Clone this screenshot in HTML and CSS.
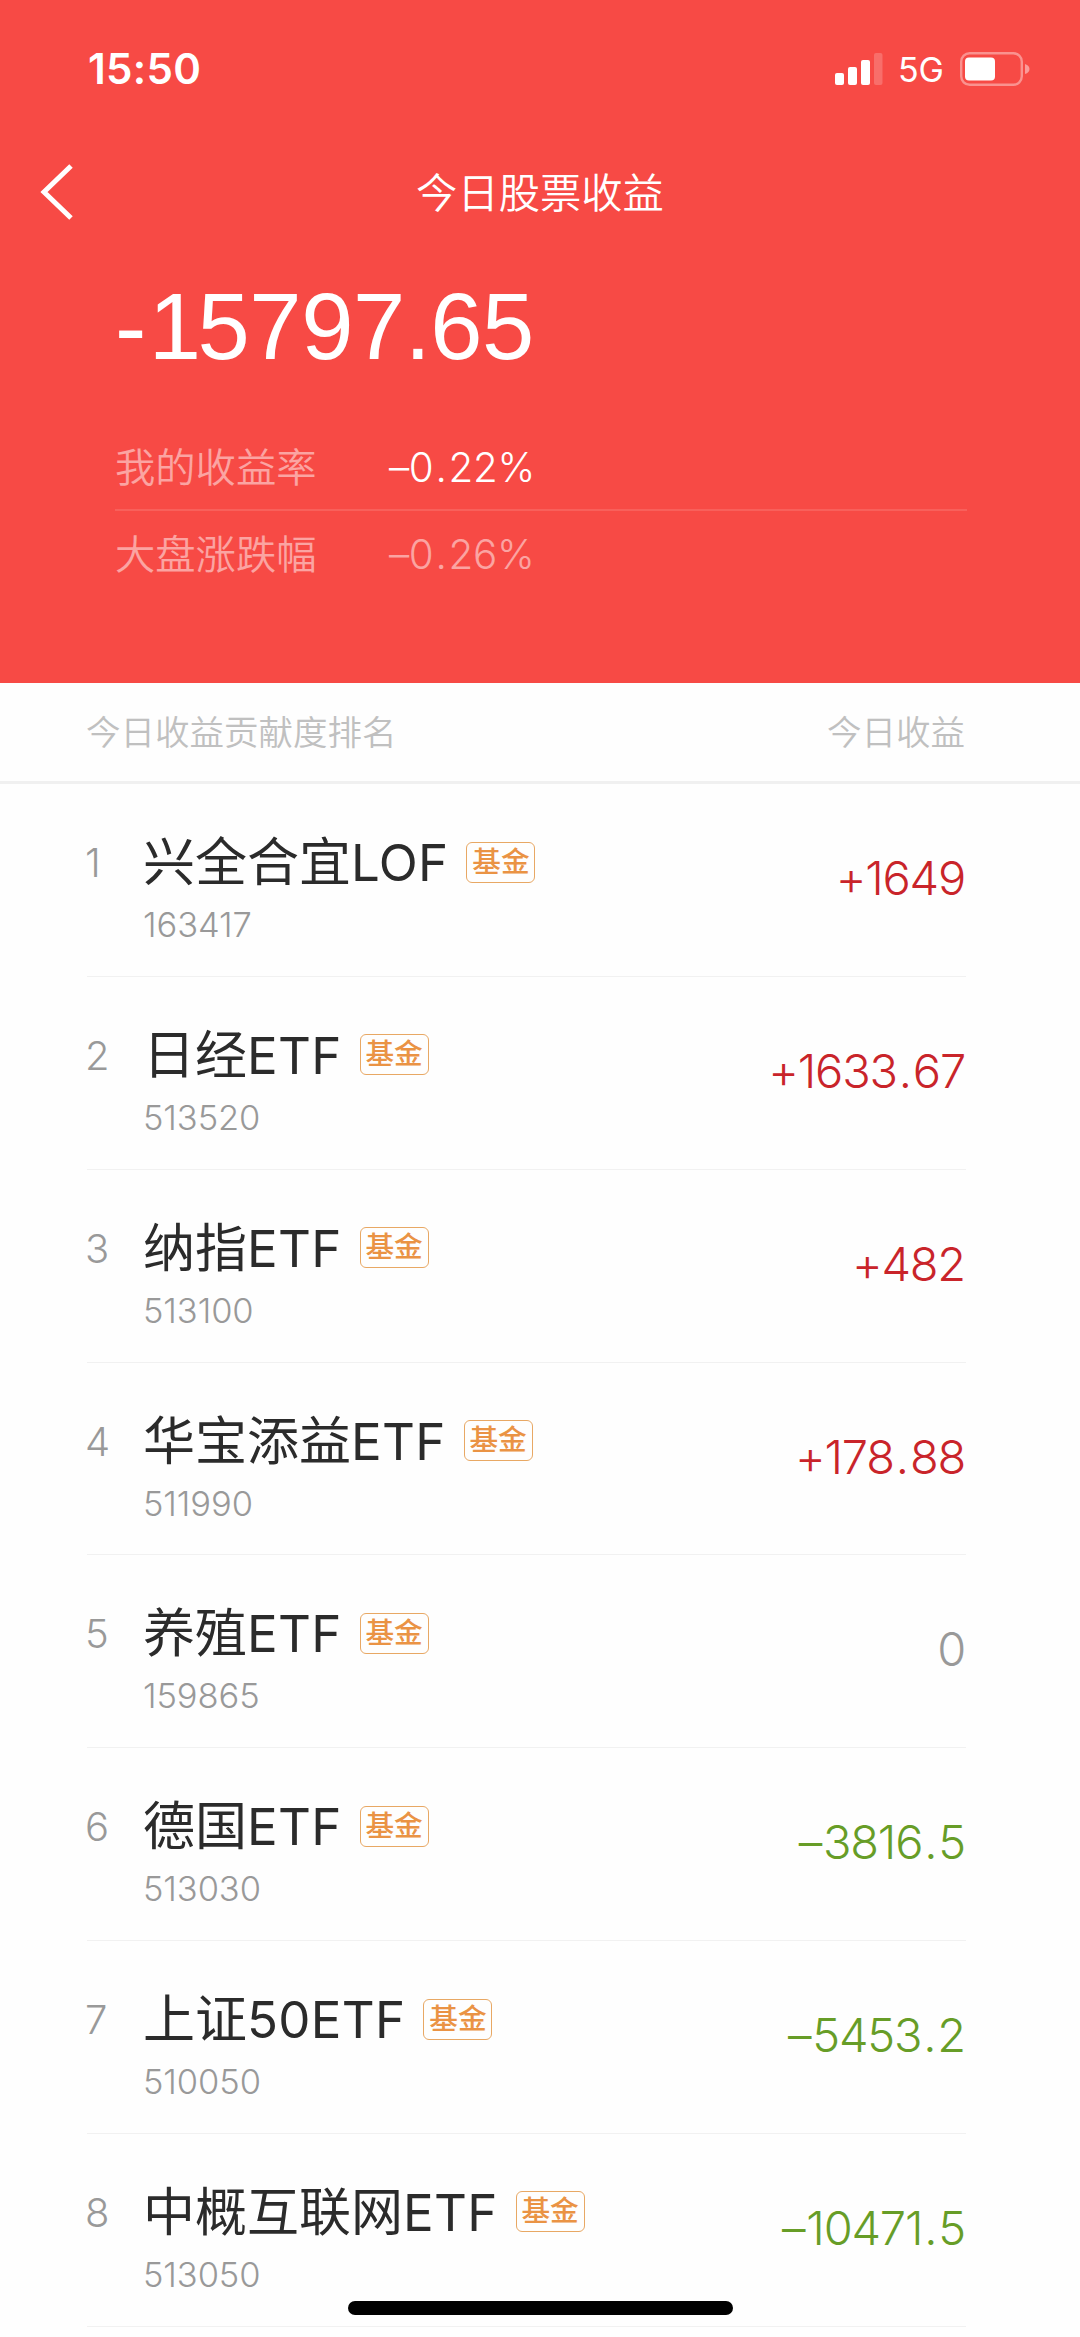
FILE: index.html
```html
<!DOCTYPE html>
<html lang="zh-CN">
<head>
<meta charset="utf-8">
<title>今日股票收益</title>
<link rel="stylesheet" href="styles.css">
</head>
<body>
<header class="hero">
  <div class="status">
    <span class="time">15:50</span>
    <div class="indicators">
      <svg class="signal" width="48" height="32" viewBox="0 0 48 32" fill="#fff"><rect x="0" y="20" width="9" height="12" rx="2"/><rect x="13" y="14" width="9" height="18" rx="2"/><rect x="26" y="7" width="9" height="25" rx="2"/><rect x="39" y="0" width="8.500" height="32" rx="2" opacity=".2"/></svg>
      <span class="network">5G</span>
      <svg class="battery" width="70" height="34" viewBox="0 0 70 34"><rect x="1.200" y="1.200" width="60.600" height="31.600" rx="8.500" fill="none" stroke="#fff" stroke-opacity=".4" stroke-width="2.400"/><rect x="5" y="5.500" width="30" height="23" rx="4" fill="#fff"/><path d="M65 12q4.500 1.500 4.500 5t-4.500 5z" fill="#fff" fill-opacity=".45"/></svg>
    </div>
  </div>
  <nav class="nav">
    <svg class="back" width="36" height="58" viewBox="0 0 36 58" fill="none" stroke="#fff" stroke-width="5"><path d="M33 2L6 28l27 26"/></svg>
    <h1 class="title">今日股票收益</h1>
  </nav>
  <div class="total">-<span class="lead">1</span>5797.65</div>
  <dl class="rates">
    <div class="rate"><dt>我的收益率</dt><dd class="strong">–0<span class="dot">.</span>22%</dd></div>
    <div class="rate"><dt>大盘涨跌幅</dt><dd>–0<span class="dot">.</span>26%</dd></div>
  </dl>
</header>
<div class="columns"><span>今日收益贡献度排名</span><span>今日收益</span></div>
<main class="list">
  <div class="row"><span class="rank">1</span><div class="fund"><div class="name">兴全合宜<span class="latin">LOF</span><span class="tag">基金</span></div><div class="code">163417</div></div><span class="amount up">+1649</span></div>
  <div class="row"><span class="rank">2</span><div class="fund"><div class="name">日经<span class="latin">ETF</span><span class="tag">基金</span></div><div class="code">513520</div></div><span class="amount up">+1633<span class="dot">.</span>67</span></div>
  <div class="row"><span class="rank">3</span><div class="fund"><div class="name">纳指<span class="latin">ETF</span><span class="tag">基金</span></div><div class="code">513100</div></div><span class="amount up">+482</span></div>
  <div class="row"><span class="rank">4</span><div class="fund"><div class="name">华宝添益<span class="latin">ETF</span><span class="tag">基金</span></div><div class="code">511990</div></div><span class="amount up">+178<span class="dot">.</span>88</span></div>
  <div class="row"><span class="rank">5</span><div class="fund"><div class="name">养殖<span class="latin">ETF</span><span class="tag">基金</span></div><div class="code">159865</div></div><span class="amount">0</span></div>
  <div class="row"><span class="rank">6</span><div class="fund"><div class="name">德国<span class="latin">ETF</span><span class="tag">基金</span></div><div class="code">513030</div></div><span class="amount down"><span class="minus">–</span>3816<span class="dot">.</span>5</span></div>
  <div class="row"><span class="rank">7</span><div class="fund"><div class="name">上证<span class="latin">50ETF</span><span class="tag">基金</span></div><div class="code">510050</div></div><span class="amount down"><span class="minus">–</span>5453<span class="dot">.</span>2</span></div>
  <div class="row"><span class="rank">8</span><div class="fund"><div class="name">中概互联网<span class="latin">ETF</span><span class="tag">基金</span></div><div class="code">513050</div></div><span class="amount down"><span class="minus">–</span>10471<span class="dot">.</span>5</span></div>
</main>
<div class="home-bar"></div>
</body>
</html>
```
FILE: styles.css
```css
* { box-sizing: border-box; }
body {
  margin: 0;
  width: 1080px;
  height: 2337px;
  overflow: hidden;
  position: relative;
  background: #fefefe;
  font-family: Inter, "Noto Sans CJK SC", sans-serif;
  font-weight: 300;
}
.hero { height: 683px; background: #f74a45; color: #fff; }
.status { height: 138px; padding: 0 50px 0 88px; display: flex; justify-content: space-between; align-items: center; }
.time { font-size: 42px; font-weight: 600; line-height: 50px; letter-spacing: .3px; }
.indicators { display: flex; align-items: center; }
.network { margin: 2px 16px 0 15px; font-size: 34px; font-weight: 400; line-height: 40px; }
.nav { height: 110px; padding: 0 38px; display: grid; grid-template-columns: 36px 1fr 36px; align-items: center; }
.title { margin: 0; font-size: 41.3px; font-weight: 350; line-height: 60px; text-align: center; }
.total { padding-left: 115px; height: 158px; font: 400 94px/158px "Liberation Sans", sans-serif; letter-spacing: -.5px; }
.lead { margin: 0 -3px 0 3px; }
.rates { margin: 0 113px 0 115px; padding-top: 19px; font-size: 40.3px; font-weight: 350; color: rgba(255, 255, 255, .5); }
.rate { height: 84px; display: flex; align-items: center; }
.rate + .rate { height: 88px; border-top: 2px solid rgba(255, 255, 255, .12); }
.rate dt { width: 274px; padding-bottom: 5px; }
.rate dd { margin: 0; letter-spacing: -.3px; }
.rate .strong { color: #fff; }
.dot { margin: 0 2px; }
.minus { margin-right: 2px; }
.columns { height: 101px; padding: 0 115px 4px 86px; display: flex; justify-content: space-between; align-items: center; border-bottom: 3px solid #f0f0f0; font-size: 34.5px; font-weight: 350; color: #c0c0c0; }
.list { padding: 0 114px 0 87px; }
.row { height: 192.85px; display: grid; grid-template-columns: 57px 1fr auto; border-bottom: 1.500px solid #f1f1f1; color: #999; }
.rank { padding-top: 54px; margin-left: -2px; font-size: 40px; line-height: 50px; }
.fund { padding-top: 46px; }
.name { height: 66px; margin-left: -1px; display: flex; align-items: center; font-size: 52px; font-weight: 400; line-height: 66px; color: #2b2b2b; }
.latin { font-size: 51px; font-weight: 400; letter-spacing: .3px; }
.tag { width: 69px; height: 41px; margin: -2px 0 0 18px; border: 1.500px solid #e8a864; border-radius: 6px; font-size: 28.7px; font-weight: 500; line-height: 37px; text-align: center; color: #ea9344; }
.code { margin: 9px 0 0 -1px; font-size: 34.5px; line-height: 40px; letter-spacing: -.1px; }
.amount { padding: 64px 1px 0 0; font-size: 47px; line-height: 60px; letter-spacing: -1.200px; }
.up { color: #c9242a; }
.down { color: #679d27; }
.home-bar { position: absolute; left: 348px; top: 2301px; width: 385px; height: 14px; border-radius: 7px; background: #000; }
```
